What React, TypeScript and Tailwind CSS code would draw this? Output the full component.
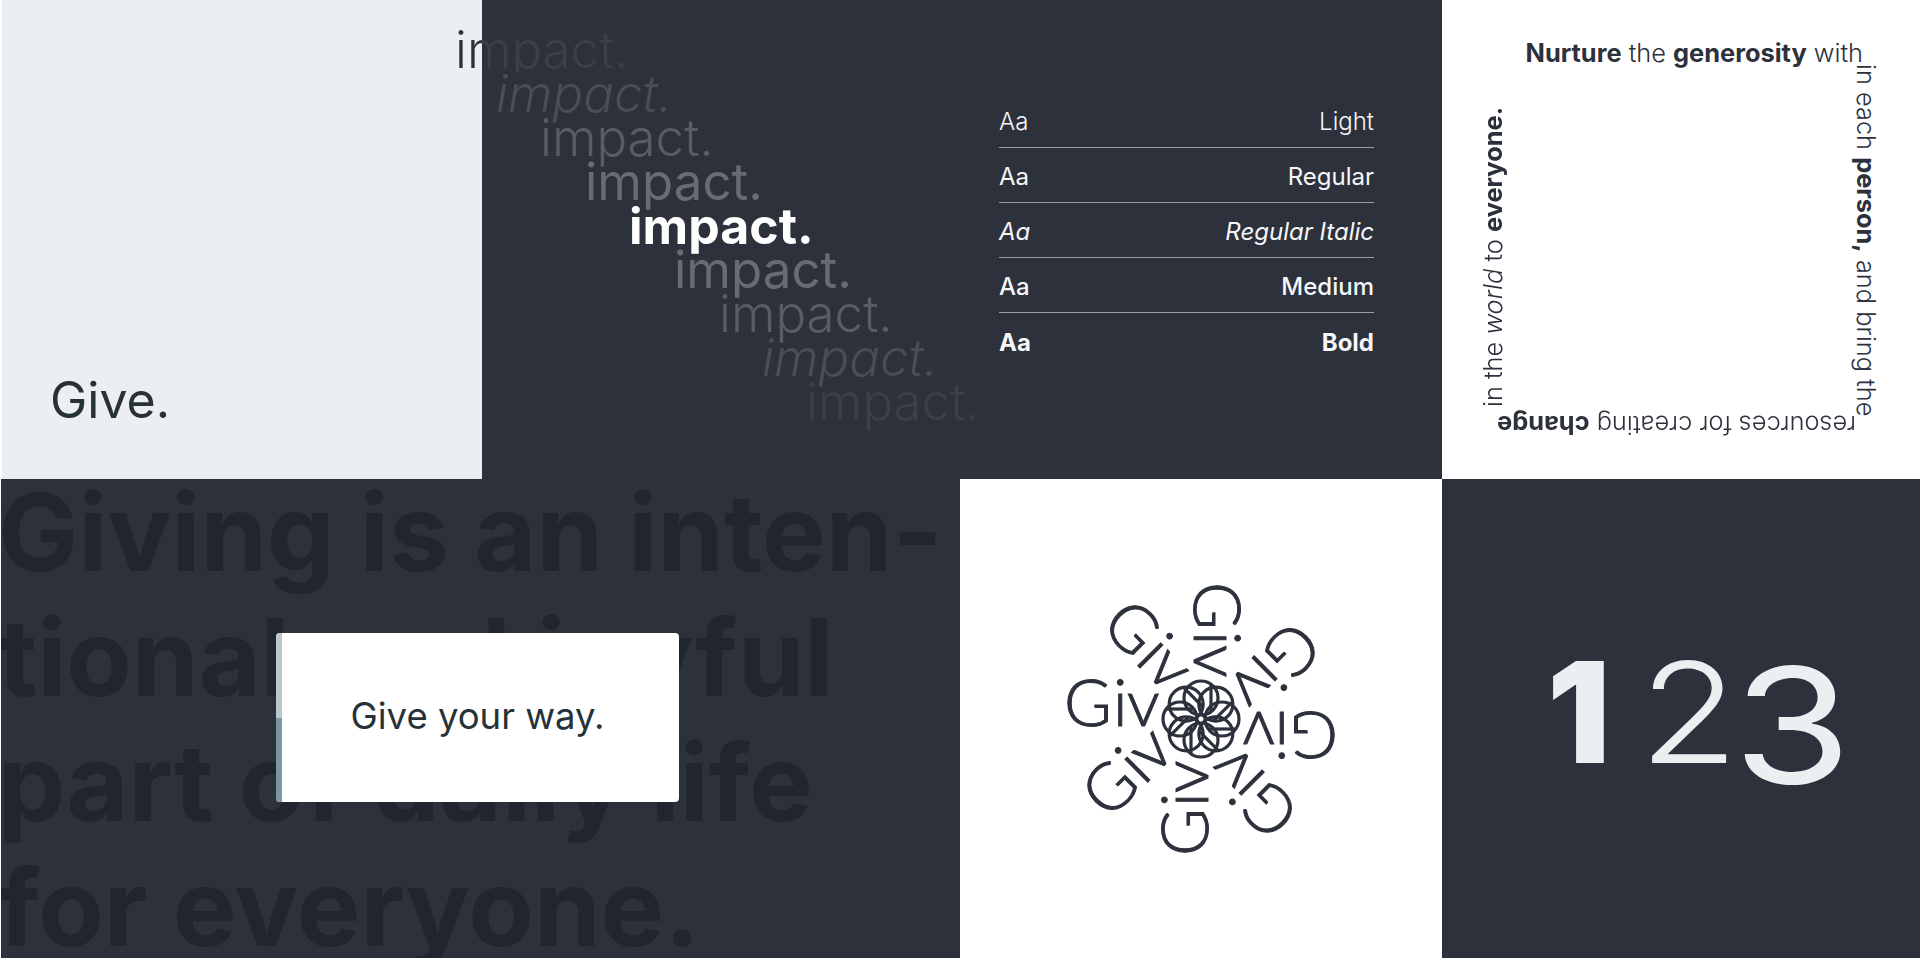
const rotations = [0, 45, 90, 135, 180, 225, 270, 315];

const impactRows = [
  { ml: 'ml-[-27px]', cls: 'text-[51px] font-light bg-[linear-gradient(to_right,#2d313c_27px,#3c3f4a_27px)] bg-clip-text text-transparent' },
  { ml: 'ml-[14px]', cls: 'text-[51px] font-light italic text-[#4a4d58]' },
  { ml: 'ml-[58px]', cls: 'text-[51px] font-light text-[#595c66]' },
  { ml: 'ml-[103px]', cls: 'text-[51px] font-normal text-[#686b74]' },
  { ml: 'ml-[147px]', cls: 'text-[50px] font-bold text-white' },
  { ml: 'ml-[192px]', cls: 'text-[51px] font-normal text-[#686b74]' },
  { ml: 'ml-[237px]', cls: 'text-[51px] font-light text-[#595c66]' },
  { ml: 'ml-[280px]', cls: 'text-[51px] font-light italic text-[#4a4d58]' },
  { ml: 'ml-[324px]', cls: 'text-[51px] font-light text-[#3c3f4a]' },
];

const weights = [
  { label: 'Light', cls: 'font-light' },
  { label: 'Regular', cls: 'font-normal' },
  { label: 'Regular Italic', cls: 'font-normal italic' },
  { label: 'Medium', cls: 'font-medium' },
  { label: 'Bold', cls: 'font-bold' },
];

function Logo() {
  return (
    <svg width="320" height="300" viewBox="-160 -150 320 300" className="text-[#2d313c]">
      {rotations.map((r) => (
        <g key={r} transform={`rotate(${r})`} fontFamily="Lato" fontWeight="300" fontSize="65" fill="currentColor" stroke="currentColor" strokeWidth="1">
          <text x="-137" y="7">G</text>
          <text x="-88" y="7">i</text>
          <text x="-74" y="7">v</text>
          <circle cx="-21" cy="0" r="17" fill="none" strokeWidth="3.2" />
          <line x1="-34" y1="-10" x2="-8" y2="-10" strokeWidth="3.2" />
        </g>
      ))}
    </svg>
  );
}

export default function App() {
  return (
    <div className="w-[1920px] h-[960px] bg-white overflow-hidden pl-[1px] pb-[2px] font-['Inter',sans-serif]">
      <div className="grid grid-cols-[481px_478px_482px_478px] grid-rows-[479px_479px] h-full">
        {/* Give */}
        <div className="bg-[#eceff1] ml-[1px] flex items-end pl-[48px] pb-[49px]">
          <span className="text-[50px] leading-[60px] text-[#263238]">Give.</span>
        </div>

        {/* impact + weights */}
        <div className="col-span-2 bg-[#2d313c] flex">
          <div className="w-[478px] pt-[28px]">
            {impactRows.map((row, i) => (
              <div key={i} className={`${row.ml} ${row.cls} leading-[44px] w-fit whitespace-nowrap`}>
                impact.
              </div>
            ))}
          </div>
          <div className="flex-1 pt-[93px] pl-[39px] pr-[68px]">
            {weights.map((w, i) => (
              <div
                key={w.label}
                className={`${w.cls} flex justify-between items-center h-[55px] pt-[4px] text-[24px] text-[#f5f6f7] ${i < 4 ? 'border-b border-[#9a9da4]' : ''}`}
              >
                <span>Aa</span>
                <span>{w.label}</span>
              </div>
            ))}
          </div>
        </div>

        {/* Text square */}
        <div className="bg-white flex flex-col text-[25.4px] leading-[32px] text-[#2d313c] font-light pt-[37px] pl-[35px] pr-[38px]">
          <div className="text-right mr-[19px] whitespace-nowrap">
            <b className="font-bold">Nurture</b> the <b className="font-bold">generosity</b> with
          </div>
          <div className="flex justify-between h-[340px]">
            <div className="[writing-mode:vertical-rl] rotate-180 whitespace-nowrap text-left mb-[2px]">
              in the <i>world</i> to <b className="font-bold">everyone.</b>
            </div>
            <div className="[writing-mode:vertical-rl] whitespace-nowrap mt-[-5px]">
              in each <b className="font-bold">person,</b> and bring the
            </div>
          </div>
          <div className="rotate-180 text-left mr-[26px] whitespace-nowrap">
            resources for creating <b className="font-bold">change</b>
          </div>
        </div>

        {/* Giving statement */}
        <div className="col-span-2 bg-[#2d313c] relative overflow-hidden">
          <div className="text-[107px] leading-[125px] mt-[-9px] ml-[-3px] font-bold text-[#21252e] whitespace-nowrap">
            Giving is an inten-
            <br />
            tional and joyful
            <br />
            part of daily life
            <br />
            for everyone.
          </div>
          <div className="absolute left-[275px] top-[154px] w-[403px] h-[169px] pb-[3px] bg-white rounded-[4px] overflow-hidden flex items-center justify-center">
            <div className="absolute left-0 top-0 w-[6px] h-full flex flex-col">
              <div className="flex-1 bg-[#b9c7cc]" />
              <div className="flex-1 bg-[#7a95a3]" />
            </div>
            <span className="text-[36.5px] text-[#263238]">Give your way.</span>
          </div>
        </div>

        {/* Logo */}
        <div className="bg-white flex items-center justify-center">
          <Logo />
        </div>

        {/* 123 */}
        <div className="bg-[#2d313c] flex items-baseline justify-center text-[#eceff1] leading-none pt-[146px]">
          <span className="text-[140px] font-black ml-[17px]">1</span>
          <span className="text-[140px] font-light ml-[29px] inline-block origin-left scale-x-[1.16]">2</span>
          <span className="text-[160px] font-normal ml-[8px] relative top-[20px] inline-block origin-left scale-x-[1.2]">3</span>
        </div>
      </div>
    </div>
  );
}
